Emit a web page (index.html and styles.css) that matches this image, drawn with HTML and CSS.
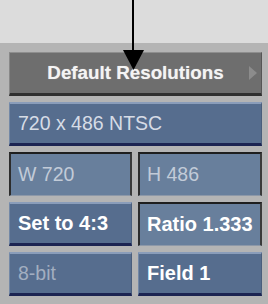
FILE: index.html
```html
<!DOCTYPE html>
<html>
<head>
<meta charset="utf-8">
<link rel="stylesheet" href="styles.css">
</head>
<body>
<div class="top"></div>
<div class="panel">
  <div class="btn gray wide">
    <span class="label">Default Resolutions</span>
    <span class="tri"></span>
  </div>
  <div class="btn blue wide"><span class="txt pale">720 x 486 NTSC</span></div>
  <div class="btn inset"><span class="txt dim">W 720</span></div>
  <div class="btn inset"><span class="txt dim">H 486</span></div>
  <div class="btn blue"><span class="txt strong">Set to 4:3</span></div>
  <div class="btn inset"><span class="txt strong">Ratio 1.333</span></div>
  <div class="btn blue"><span class="txt off">8-bit</span></div>
  <div class="btn blue"><span class="txt strong">Field 1</span></div>
</div>
<svg class="pointer" width="24" height="72" viewBox="0 0 24 72">
  <rect x="9" y="0" width="2" height="52" fill="#000"/>
  <polygon points="0,50 21,50 10.5,70" fill="#000"/>
</svg>
</body>
</html>
```
FILE: styles.css
```css
html, body {
  margin: 0;
  padding: 0;
}
body {
  width: 268px;
  height: 304px;
  background: #b4b4b4;
  font-family: "Liberation Sans", Arial, sans-serif;
  position: relative;
  overflow: hidden;
}
.top {
  height: 43px;
  background: #dcdcdc;
}
.panel {
  display: grid;
  grid-template-columns: 123px 124px;
  grid-auto-rows: 44px;
  column-gap: 6px;
  row-gap: 6px;
  padding: 9px 6px 0 9px;
}
.btn {
  box-sizing: border-box;
  display: flex;
  align-items: center;
  position: relative;
  font-size: 19.5px;
}
.wide {
  grid-column: 1 / 3;
}
.gray {
  background: #6e6e6e;
  border-top: 1px solid #8e8e8e;
  border-left: 1px solid #888;
  border-right: 1px solid #555;
  border-bottom: 3px solid #303030;
  justify-content: center;
}
.gray .label {
  color: #f4f4f4;
  font-weight: bold;
  font-size: 18.8px;
  text-shadow: 0 0 1px rgba(255,255,255,0.5);
}
.tri {
  position: absolute;
  right: 4px;
  top: 13px;
  width: 0;
  height: 0;
  border-top: 7.5px solid transparent;
  border-bottom: 7.5px solid transparent;
  border-left: 8px solid #8c8c8c;
}
.blue {
  background: #566d8e;
  border-top: 2px solid #8a9dba;
  border-left: 1px solid #7388a6;
  border-right: 1px solid #4a5e7c;
  border-bottom: 3px solid #1c2452;
  padding-left: 8px;
}
.inset {
  background: #687f9c;
  border-top: 2px solid #1e1e1e;
  border-left: 2px solid #2c2c2c;
  border-right: 2px solid #3a3a3a;
  border-bottom: 1px solid #8d98a8;
  padding-left: 7px;
}
.txt {
  white-space: nowrap;
}
.pale {
  color: #d6dce6;
}
.dim {
  color: #c2cbd8;
}
.strong {
  color: #ffffff;
  font-weight: bold;
  font-size: 20px;
}
.off {
  color: #a2aec0;
}
.pointer {
  position: absolute;
  left: 123px;
  top: 0;
}
```
